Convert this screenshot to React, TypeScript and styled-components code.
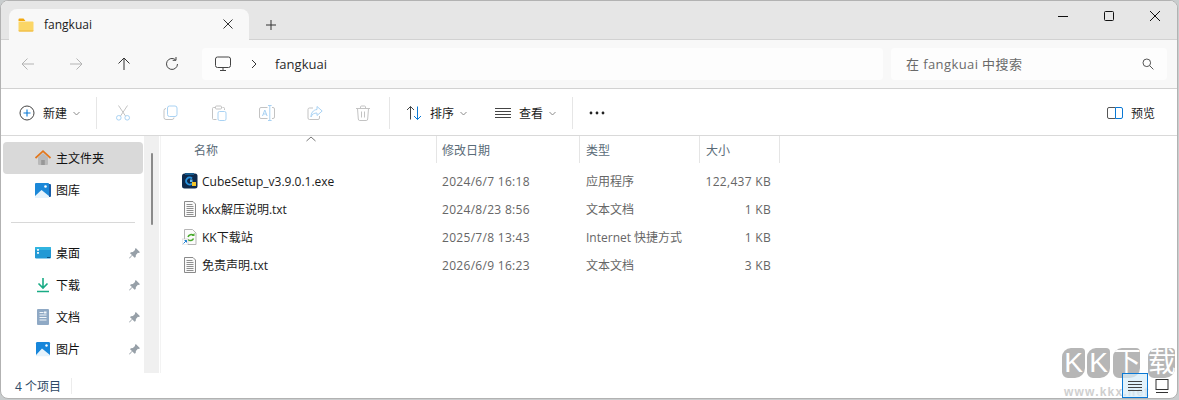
// App.tsx
import React from 'react';
import styled, { createGlobalStyle } from 'styled-components';

const GlobalStyle = createGlobalStyle`
  html, body {
    margin: 0;
    padding: 0;
    width: 1179px;
    height: 400px;
    overflow: hidden;
    background: #c9cdce;
    font-family: "Open Sans", "Noto Sans CJK SC", sans-serif;
    font-size: 12px;
    color: #1b1b1b;
  }
  * { box-sizing: border-box; }
`;

// Icons
const Svg: React.FC<{ size?: number; children: React.ReactNode }> = ({ size = 16, children }) => (
  <svg width={size} height={size} viewBox="0 0 16 16" fill="none" style={{ display: 'block', flex: 'none' }}>
    {children}
  </svg>
);

const FolderIcon = () => (
  <Svg>
    <path d="M0.5 2.500a1 1 0 0 1 1-1h4l2 2.500H.5z" fill="#f2a80f" />
    <path d="M0.5 4.500h14a1 1 0 0 1 1 1v8a1 1 0 0 1-1 1h-13a1 1 0 0 1-1-1z" fill="#fbd666" />
    <path d="M0.5 13.500h15a1 1 0 0 1-1 1h-13a1 1 0 0 1-1-1z" fill="#eeb53a" />
  </Svg>
);
const BackIcon = () => <Svg><path d="M14 8H2M7.5 2.500 2 8l5.500 5.500" stroke="#b4b4b4" strokeWidth="1" /></Svg>;
const ForwardIcon = () => <Svg><path d="M2 8h12M8.500 2.500 14 8l-5.500 5.500" stroke="#b4b4b4" strokeWidth="1" /></Svg>;
const UpIcon = () => <Svg><path d="M8 14V2M2.500 7.500 8 2l5.500 5.500" stroke="#333" strokeWidth="1" /></Svg>;
const RefreshIcon = () => (
  <Svg>
    <path d="M13.500 8a5.500 5.500 0 1 1-2-4.300" stroke="#444" strokeWidth="1" />
    <path d="M12 1v3.300H8.700" stroke="#444" strokeWidth="1" />
  </Svg>
);
const MonitorIcon = () => (
  <svg width="16" height="16" viewBox="0 0 16 16" fill="none" style={{ display: 'block' }}>
    <rect x="0.500" y="1" width="15" height="10.500" rx="2" stroke="#444" />
    <path d="M5 14.500h6M8 11.500v3" stroke="#444" />
  </svg>
);
const Chevron = () => <svg width="6" height="10" viewBox="0 0 6 10" fill="none"><path d="m1 1 4 4-4 4" stroke="#333" /></svg>;
const SearchIcon = () => (
  <svg width="12" height="12" viewBox="0 0 12 12" fill="none">
    <circle cx="4.800" cy="4.800" r="3.800" stroke="#555" />
    <path d="m7.600 7.600 3.800 3.800" stroke="#555" />
  </svg>
);
const Caret = () => <svg width="7" height="5" viewBox="0 0 7 5" fill="none"><path d="m.5 1 3 3 3-3" stroke="#8a8a8a" /></svg>;

const PlusIcon = () => (
  <Svg>
    <circle cx="8" cy="8" r="7" stroke="#444" />
    <path d="M8 4.500v7M4.500 8h7" stroke="#0a78d4" strokeWidth="1.100" />
  </Svg>
);
const CutIcon = () => (
  <Svg>
    <path d="M3.500 0.500 10.500 11M12.500 0.500 5.500 11" stroke="#c3c3c3" />
    <circle cx="3.800" cy="12.800" r="2.300" stroke="#a9d2f3" />
    <circle cx="12.200" cy="12.800" r="2.300" stroke="#a9d2f3" />
  </Svg>
);
const CopyIcon = () => (
  <Svg>
    <path d="M3 3.500A2 2 0 0 0 1 5.500v7a2 2 0 0 0 2 2h6a2 2 0 0 0 2-2" stroke="#c3c3c3" />
    <rect x="4.500" y="1" width="9.500" height="10.500" rx="2" stroke="#a9d2f3" />
  </Svg>
);
const PasteIcon = () => (
  <Svg>
    <path d="M4 2.500H2.500a1 1 0 0 0-1 1v10a1 1 0 0 0 1 1h3M11.500 2.500h1a1 1 0 0 1 1 1v1.500" stroke="#c3c3c3" />
    <rect x="4.500" y="1" width="6" height="3" rx="1" stroke="#c3c3c3" />
    <rect x="7" y="6.500" width="8" height="9" rx="1.500" stroke="#a9d2f3" />
  </Svg>
);
const RenameIcon = () => (
  <Svg>
    <path d="M8.500 2.500H2a1.500 1.500 0 0 0-1.500 1.500v8A1.500 1.500 0 0 0 2 13.500h6.500M13 2.500h1A1.500 1.500 0 0 1 15.500 4v8a1.500 1.500 0 0 1-1.500 1.500h-1" stroke="#c3c3c3" />
    <path d="M10.800 .5v15M9 .5h3.600M9 15.500h3.600" stroke="#a9d2f3" />
    <path d="m3.500 11 2.300-6 2.300 6M4.300 9h3" stroke="#a9d2f3" />
  </Svg>
);
const ShareIcon = () => (
  <Svg>
    <path d="M6 3H2.500a1.500 1.500 0 0 0-1.500 1.500v8.500A1.500 1.500 0 0 0 2.500 14.500H11a1.500 1.500 0 0 0 1.500-1.500v-2" stroke="#c3c3c3" />
    <path d="M10 1.500 15.200 6 10 10.500V8C7 8 5 9 4 12c0-4 2-7 6-7.500z" stroke="#a9d2f3" />
  </Svg>
);
const TrashIcon = () => (
  <Svg>
    <path d="M1 3.500h14M5.500 3.500V2a1 1 0 0 1 1-1h3a1 1 0 0 1 1 1v1.500M2.500 3.500l.8 10.500a1.500 1.500 0 0 0 1.500 1.500h6.400a1.500 1.500 0 0 0 1.500-1.500l.8-10.500M6.500 6.500v6M9.500 6.500v6" stroke="#c3c3c3" />
  </Svg>
);
const SortIcon = () => (
  <Svg>
    <path d="M4.500 14.500V1.500M1 5l3.500-3.500L8 5" stroke="#444" />
    <path d="M11.500 1.500v13M8 11l3.500 3.500L15 11" stroke="#0a78d4" />
  </Svg>
);
const ViewIcon = () => <Svg><path d="M0 3.500h16M0 6.500h16M0 9.500h16M0 12.500h16" stroke="#444" /></Svg>;
const PreviewIcon = () => (
  <Svg>
    <path d="M8.500 2.500H2A1.500 1.500 0 0 0 .5 4v8A1.500 1.500 0 0 0 2 13.500h6.500" stroke="#555" />
    <path d="M8.500 2.500H14A1.500 1.500 0 0 1 15.500 4v8a1.500 1.500 0 0 1-1.500 1.500H8.500z" stroke="#0a78d4" />
  </Svg>
);

const HomeIcon = () => (
  <Svg>
    <path d="M3 7.500 8 3l5 4.500V14a1 1 0 0 1-1 1H4a1 1 0 0 1-1-1z" fill="#b9b9b9" />
    <rect x="6.200" y="10" width="3.600" height="5" fill="#989898" />
    <path d="M.5 8 8 1.200 15.500 8" stroke="#e2771c" strokeWidth="1.700" />
  </Svg>
);
const GalleryIcon = () => (
  <Svg>
    <rect x="13" y="2" width="3" height="13" rx="1" fill="#1a5ea8" />
    <rect x="0" y="1" width="14" height="15" rx="1" fill="#1b88d8" />
    <path d="M0 14 6.500 8l7.500 6v2H0z" fill="#e6f3fc" />
    <circle cx="10.500" cy="4.500" r="1.300" fill="#fff" />
  </Svg>
);
const DesktopIcon = () => (
  <Svg>
    <rect x="0" y="2" width="16" height="11.500" rx="1.200" fill="#2299d5" />
    <rect x="0" y="2" width="16" height="3" rx="1" fill="#31b4e0" />
    <rect x="2" y="4" width="2" height="1.800" fill="#e5f5fc" />
    <rect x="2" y="7" width="2" height="1.800" fill="#e5f5fc" />
    <rect x="12" y="12" width="3" height="1" fill="#0d4f80" />
  </Svg>
);
const DownloadIcon = () => (
  <Svg>
    <path d="M8 1v9.500M3.500 6.500 8 11l4.500-4.500" stroke="#19ab85" strokeWidth="1.600" />
    <path d="M2 14.500h12" stroke="#19ab85" strokeWidth="1.400" />
  </Svg>
);
const DocsIcon = () => (
  <Svg>
    <rect x="2" y="0" width="12" height="16" rx="1" fill="#8fa9c5" />
    <path d="M4.500 3.500h4M4.500 6h7M4.500 8.500h7M4.500 11h7" stroke="#f2f6fa" />
    <rect x="9" y="2.500" width="2.500" height="2" fill="#f2f6fa" />
  </Svg>
);
const PicturesIcon = () => (
  <Svg>
    <rect x="1" y="1" width="14" height="14" rx="1.200" fill="#1786da" />
    <path d="M1 14 7 7.500 15 14v.5a.7.7 0 0 1-.7.700H1.700A.7.7 0 0 1 1 14.500z" fill="#e6f3fc" />
    <circle cx="11.500" cy="4.500" r="1.200" fill="#fff" />
  </Svg>
);
const PinIcon = () => (
  <svg width="11" height="11" viewBox="0 0 11 11">
    <path d="M6.800 0 11 4.200 9.800 5 8.900 4.800 6.900 7l-.2 2L5.600 9.800 3.400 7.600.6 10.600 0 10l3-2.900L1 5.200 1.900 4.200l2-.2L6 2 6 1z" fill="#97a0a8" />
  </svg>
);

const CubeIcon = () => (
  <Svg>
    <rect x="0" y="0.500" width="15.500" height="15" rx="2.500" fill="#0e2a4c" />
    <rect x="3" y="0" width="9" height="2" fill="#1a5b8c" />
    <path d="M10 5.500A3.500 3.500 0 1 0 10 10.500" stroke="#2a95e0" strokeWidth="1.800" />
    <rect x="10" y="9" width="4" height="4" fill="#f3c52a" />
    <rect x="8" y="6.500" width="2.500" height="2.500" fill="#62b8ea" />
  </Svg>
);
const TextFileIcon = () => (
  <Svg>
    <path d="M2.500.5H11L13.500 3v12.500h-11z" fill="#fafafa" stroke="#8a8a8a" />
    <path d="M4.500 3.500h6M4.500 5.500h7M4.500 7.500h7M4.500 9.500h7M4.500 11.500h7M4.500 13.500h7" stroke="#8f8f8f" />
  </Svg>
);
const LinkFileIcon = () => (
  <Svg>
    <path d="M2.500.5H10.500L14 4v11.500H2.500z" fill="#fbfbfb" stroke="#b5b5b5" />
    <path d="M11.500 6.500a3.300 3.300 0 0 0-5.500 1.500M6 10.500a3.300 3.300 0 0 0 5.500-1" stroke="#4bab2f" strokeWidth="1.500" />
    <path d="M9.500 7h3V4z" fill="#4bab2f" />
    <rect x="0" y="10" width="6" height="6" fill="#fff" stroke="#bbb" strokeWidth="0.500" />
    <path d="M1.500 14.500 4.500 11.500M2.500 11.500h2v2" stroke="#1e7fd0" />
  </Svg>
);

// Layout
const Window = styled.div`
  position: relative;
  width: 1178px;
  height: 399px;
  border: 1px solid #b2b2b2;
  border-radius: 8px;
  background: #fff;
  overflow: hidden;
  display: flex;
  flex-direction: column;
`;

const TabBar = styled.div`
  height: 39px;
  flex: none;
  background: #e6e6e6;
  border-bottom: 1px solid #d2d2d2;
  padding: 8px 0 0 8px;
  display: flex;
  align-items: flex-start;
`;

const Tab = styled.div`
  width: 240px;
  height: 31px;
  background: #f8f8f8;
  border-radius: 8px 8px 0 0;
  display: flex;
  align-items: center;
  padding: 0 16px 0 9px;
  gap: 10px;
  font-size: 12px;
  font-weight: 500;
`;

const TabTitle = styled.span`
  flex: 1;
`;

const CloseGlyph = styled.svg`
  display: block;
  width: 10px;
  height: 10px;
  margin-bottom: 2px;
`;

const NewTab = styled.div`
  width: 44px;
  height: 31px;
  display: flex;
  align-items: center;
  justify-content: center;
`;

const Spacer = styled.div`
  flex: 1;
`;

const FixedGap = styled.div<{ $width: number }>`
  width: ${p => p.$width}px;
  flex: none;
`;

const Controls = styled.div`
  display: flex;
  margin: -8px -1px 0 0;
`;

const ControlButton = styled.div`
  width: 46px;
  height: 30px;
  display: flex;
  align-items: center;
  justify-content: center;
`;

const AddressRow = styled.div`
  height: 49px;
  flex: none;
  background: #f8f8f8;
  border-bottom: 1px solid #d2d2d2;
  display: flex;
  align-items: center;
  padding: 0 10px 1px 3px;
`;

const NavButton = styled.div`
  width: 48px;
  height: 32px;
  display: flex;
  align-items: center;
  justify-content: center;
`;

const AddressBox = styled.div`
  width: 681px;
  height: 32px;
  margin-left: 6px;
  border-radius: 4px;
  background: #fdfdfd;
  display: flex;
  align-items: center;
  padding-left: 13px;
  font-size: 13px;
  color: #2a2a2a;
`;

const Crumb = styled.span`
  display: flex;
  margin: 0 18px 0 20px;
`;

const SearchBox = styled.div`
  flex: 1;
  height: 32px;
  margin-left: 8px;
  border-radius: 4px;
  background: #fdfdfd;
  display: flex;
  align-items: center;
  justify-content: space-between;
  padding: 0 13px 0 15px;
  font-size: 13px;
  letter-spacing: 0.4px;
  color: #6a6a6a;
`;

const Toolbar = styled.div`
  height: 47px;
  flex: none;
  background: #fff;
  border-bottom: 1px solid #d9d9d9;
  display: flex;
  align-items: center;
  padding: 2px 22px 0 18px;
`;

const ToolGroup = styled.div`
  display: flex;
  align-items: center;
  gap: 8px;
  font-size: 12px;
`;

const CaretSlot = styled.span`
  display: flex;
  margin-left: -2px;
`;

const ToolIcon = styled.div`
  width: 48px;
  display: flex;
  justify-content: center;
`;

const Separator = styled.div<{ $left: number; $right: number }>`
  width: 1px;
  height: 32px;
  background: #e6e6e6;
  margin: 0 ${p => p.$right}px 0 ${p => p.$left}px;
`;

const Body = styled.div`
  flex: 1;
  min-height: 0;
  display: flex;
`;

const Sidebar = styled.div`
  width: 143px;
  flex: none;
  padding: 6px 0 0 2px;
`;

const NavItem = styled.div<{ $selected?: boolean }>`
  width: 140px;
  height: 32px;
  border-radius: 4px;
  background: ${p => (p.$selected ? '#d9d9d9' : 'transparent')};
  display: flex;
  align-items: center;
  padding: 0 3px 0 32px;
  gap: 5px;
  font-size: 12px;
  color: #111;
`;

const NavLabel = styled.span`
  flex: 1;
`;

const NavDivider = styled.div`
  width: 124px;
  height: 1px;
  background: #d8d8d8;
  margin: 16px 0 14px 8px;
`;

const Scroller = styled.div`
  width: 16px;
  flex: none;
  background: #f0f0f0;
  border-right: 1px solid #fff;
  padding: 17px 0 0 7px;
`;

const ScrollThumb = styled.div`
  width: 2px;
  height: 72px;
  border-radius: 1px;
  background: #8a8a8a;
`;

const ListPane = styled.div`
  position: relative;
  flex: 1;
  border-left: 1px solid #f3f3f3;
`;

const Columns = `276px 143px 120px 80px`;

const HeaderRow = styled.div`
  display: grid;
  grid-template-columns: ${Columns};
  height: 27px;
  margin-bottom: 4px;
`;

const HeaderCell = styled.div<{ $pad: number }>`
  border-right: 1px solid #e5e5e5;
  padding: 0 0 0 ${p => p.$pad}px;
  display: flex;
  align-items: center;
  font-size: 12px;
  color: #5a6b78;
`;

const SortCaret = styled.svg`
  position: absolute;
  left: 145px;
  top: 0;
  width: 10px;
  height: 6px;
`;

const FileRow = styled.div`
  display: grid;
  grid-template-columns: ${Columns};
  height: 28px;
  align-items: center;
  font-size: 12px;
  color: #666;
`;

const NameCell = styled.div`
  display: flex;
  align-items: center;
  gap: 4px;
  padding-left: 21px;
  color: #1b1b1b;
`;

const DateCell = styled.div`
  padding-left: 5px;
  letter-spacing: 0.3px;
  white-space: nowrap;
`;

const TypeCell = styled.div`
  padding-left: 6px;
  white-space: nowrap;
`;

const SizeCell = styled.div`
  text-align: right;
  padding-right: 9px;
  letter-spacing: 0.3px;
`;

const StatusBar = styled.div`
  position: relative;
  z-index: 1;
  height: 25px;
  flex: none;
  display: flex;
  align-items: center;
  padding: 0 0 0 14px;
  font-size: 12px;
  color: #2f4a66;
`;

const StatusSep = styled.div`
  width: 1px;
  height: 16px;
  background: #ececec;
  margin-left: 10px;
`;

const ViewToggle = styled.div`
  display: flex;
  align-items: center;
  margin-right: 2px;
`;

const ToggleButton = styled.div<{ $active?: boolean }>`
  width: 26px;
  height: 25px;
  display: flex;
  align-items: center;
  justify-content: center;
  margin-right: ${p => (p.$active ? 1 : 0)}px;
  border: 1px solid ${p => (p.$active ? '#0a78d4' : 'transparent')};
  background: ${p => (p.$active ? 'rgba(214, 236, 250, 0.7)' : 'transparent')};
`;

// Watermark over the bottom right corner
const Watermark = styled.div`
  position: absolute;
  right: 2px;
  bottom: 0;
  width: 113px;
  height: 50px;
  pointer-events: none;
`;

const MarkTitle = styled.div`
  display: flex;
  height: 30px;
`;

const MarkChar = styled.span<{ $width: number; $gap: number }>`
  width: ${p => p.$width}px;
  height: 30px;
  margin-right: ${p => p.$gap}px;
  background: #b6b6b6;
  color: #fff;
  border-radius: 9px 4px 10px 6px;
  overflow: hidden;
  font-family: "Liberation Sans", "Noto Sans CJK SC", sans-serif;
  font-size: 28px;
  line-height: 30px;
  text-align: center;
`;

const MarkUrl = styled.div`
  font-family: "Liberation Sans", sans-serif;
  font-size: 12px;
  font-weight: 700;
  letter-spacing: 1.2px;
  line-height: 12px;
  margin: 8px 0 0 2px;
  white-space: nowrap;
  color: #cfcfcf;
`;

const pinned = [
  { icon: <DesktopIcon />, label: '桌面' },
  { icon: <DownloadIcon />, label: '下载' },
  { icon: <DocsIcon />, label: '文档' },
  { icon: <PicturesIcon />, label: '图片' },
];

const files = [
  { icon: <CubeIcon />, name: 'CubeSetup_v3.9.0.1.exe', date: '2024/6/7 16:18', type: '应用程序', size: '122,437 KB' },
  { icon: <TextFileIcon />, name: 'kkx解压说明.txt', date: '2024/8/23 8:56', type: '文本文档', size: '1 KB' },
  { icon: <LinkFileIcon />, name: 'KK下载站', date: '2025/7/8 13:43', type: 'Internet 快捷方式', size: '1 KB' },
  { icon: <TextFileIcon />, name: '免责声明.txt', date: '2026/6/9 16:23', type: '文本文档', size: '3 KB' },
];

const App: React.FC = () => (
  <>
    <GlobalStyle />
    <Window>
      <TabBar>
        <Tab>
          <FolderIcon />
          <TabTitle>fangkuai</TabTitle>
          <CloseGlyph viewBox="0 0 10 10" fill="none"><path d="m.5.5 9 9M9.500.5l-9 9" stroke="#333" /></CloseGlyph>
        </Tab>
        <NewTab>
          <svg width="12" height="12" viewBox="0 0 12 12" fill="none"><path d="M6 1v10M1 6h10" stroke="#333" /></svg>
        </NewTab>
        <Spacer />
        <Controls>
          <ControlButton>
            <svg width="10" height="10" viewBox="0 0 10 10" fill="none"><path d="M0 5.500h10" stroke="#111" /></svg>
          </ControlButton>
          <ControlButton>
            <svg width="10" height="10" viewBox="0 0 10 10" fill="none"><rect x=".5" y=".5" width="9" height="9" rx="1" stroke="#111" /></svg>
          </ControlButton>
          <ControlButton>
            <svg width="10" height="10" viewBox="0 0 10 10" fill="none"><path d="m0 0 10 10M10 0 0 10" stroke="#111" /></svg>
          </ControlButton>
        </Controls>
      </TabBar>

      <AddressRow>
        <NavButton><BackIcon /></NavButton>
        <NavButton><ForwardIcon /></NavButton>
        <NavButton><UpIcon /></NavButton>
        <NavButton><RefreshIcon /></NavButton>
        <AddressBox>
          <MonitorIcon />
          <Crumb><Chevron /></Crumb>
          fangkuai
        </AddressBox>
        <SearchBox>
          在 fangkuai 中搜索
          <SearchIcon />
        </SearchBox>
      </AddressRow>

      <Toolbar>
        <ToolGroup>
          <PlusIcon />
          新建
          <CaretSlot><Caret /></CaretSlot>
        </ToolGroup>
        <Separator $left={16} $right={2} />
        <ToolIcon><CutIcon /></ToolIcon>
        <ToolIcon><CopyIcon /></ToolIcon>
        <ToolIcon><PasteIcon /></ToolIcon>
        <ToolIcon><RenameIcon /></ToolIcon>
        <ToolIcon><ShareIcon /></ToolIcon>
        <ToolIcon><TrashIcon /></ToolIcon>
        <Separator $left={2} $right={16} />
        <ToolGroup>
          <SortIcon />
          排序
          <CaretSlot><Caret /></CaretSlot>
        </ToolGroup>
        <FixedGap $width={28} />
        <ToolGroup>
          <ViewIcon />
          查看
          <CaretSlot><Caret /></CaretSlot>
        </ToolGroup>
        <Separator $left={16} $right={16} />
        <svg width="16" height="4" viewBox="0 0 16 4">
          <circle cx="2" cy="2" r="1.400" fill="#222" />
          <circle cx="8" cy="2" r="1.400" fill="#222" />
          <circle cx="14" cy="2" r="1.400" fill="#222" />
        </svg>
        <Spacer />
        <ToolGroup>
          <PreviewIcon />
          预览
        </ToolGroup>
      </Toolbar>

      <Body>
        <Sidebar>
          <NavItem $selected><HomeIcon /><NavLabel>主文件夹</NavLabel></NavItem>
          <NavItem><GalleryIcon /><NavLabel>图库</NavLabel></NavItem>
          <NavDivider />
          {pinned.map(item => (
            <NavItem key={item.label}>
              {item.icon}
              <NavLabel>{item.label}</NavLabel>
              <PinIcon />
            </NavItem>
          ))}
        </Sidebar>
        <Scroller><ScrollThumb /></Scroller>
        <ListPane>
          <SortCaret viewBox="0 0 10 6" fill="none"><path d="m.5 5 4.500-4 4.500 4" stroke="#777" /></SortCaret>
          <HeaderRow>
            <HeaderCell $pad={33}>名称</HeaderCell>
            <HeaderCell $pad={5}>修改日期</HeaderCell>
            <HeaderCell $pad={6}>类型</HeaderCell>
            <HeaderCell $pad={6}>大小</HeaderCell>
          </HeaderRow>
          {files.map(file => (
            <FileRow key={file.name}>
              <NameCell>{file.icon}{file.name}</NameCell>
              <DateCell>{file.date}</DateCell>
              <TypeCell>{file.type}</TypeCell>
              <SizeCell>{file.size}</SizeCell>
            </FileRow>
          ))}
        </ListPane>
      </Body>

      <Watermark>
        <MarkTitle>
          <MarkChar $width={23} $gap={2}>K</MarkChar>
          <MarkChar $width={23} $gap={3}>K</MarkChar>
          <MarkChar $width={27} $gap={8}>下</MarkChar>
          <MarkChar $width={27} $gap={0}>载</MarkChar>
        </MarkTitle>
        <MarkUrl>www.kkx.net</MarkUrl>
      </Watermark>

      <StatusBar>
        4 个项目
        <StatusSep />
        <Spacer />
        <ViewToggle>
          <ToggleButton $active>
            <svg width="14" height="12" viewBox="0 0 14 12" fill="none"><path d="M0 1.500h14M0 4.500h14M0 7.500h14M0 10.500h14" stroke="#444" /></svg>
          </ToggleButton>
          <ToggleButton>
            <svg width="14" height="14" viewBox="0 0 14 14" fill="none"><rect x="1" y=".5" width="12" height="10" stroke="#333" /><path d="M1 13.500h12" stroke="#333" /></svg>
          </ToggleButton>
        </ViewToggle>
      </StatusBar>
    </Window>
  </>
);

export default App;
